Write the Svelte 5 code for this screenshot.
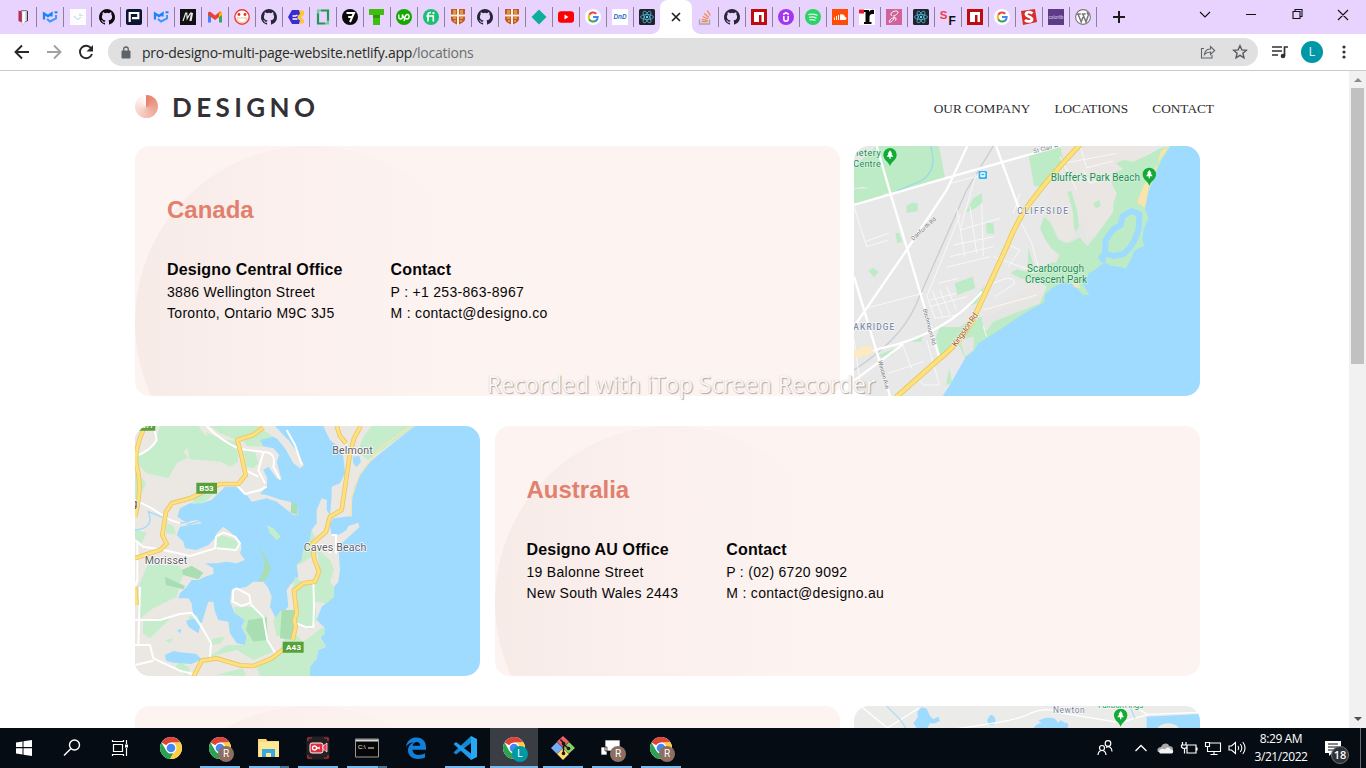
<script>
  const tabsLeft = [
    ['book', 28], ['mui', 27], ['swirl', 28], ['github', 29], ['p', 27], ['mui', 27], ['m', 27],
    ['gmail', 27], ['face', 27], ['github2', 27], ['hex', 27], ['scroll', 27], ['seven', 27],
    ['tee', 27], ['up', 27], ['fi', 27], ['shield', 27], ['github2', 27], ['shield', 27],
    ['diamond', 27], ['youtube', 27], ['google', 27], ['dnd', 27], ['react', 24]
  ];
  const tabsRight = [
    'stack', 'github2', 'npm', 'udemy', 'spotify', 'cloud', 'r', 'sass', 'react',
    'sf', 'npm', 'google', 's', 'colorlib', 'wordpress'
  ];
  const nav = ['OUR COMPANY', 'LOCATIONS', 'CONTACT'];
  const offices = [
    { country: 'Canada', office: 'Designo Central Office', lines: ['3886 Wellington Street', 'Toronto, Ontario M9C 3J5'], phone: 'P : +1 253-863-8967', mail: 'M : contact@designo.co', map: 'canada' },
    { country: 'Australia', office: 'Designo AU Office', lines: ['19 Balonne Street', 'New South Wales 2443'], phone: 'P : (02) 6720 9092', mail: 'M : contact@designo.au', map: 'australia' }
  ];
  const apps = [
    { icon: 'chrome' },
    { icon: 'chrome', badge: 'R', run: 'one' },
    { icon: 'folder', run: 'many' },
    { icon: 'recorder', run: 'one' },
    { icon: 'cmd', run: 'many' },
    { icon: 'edge' },
    { icon: 'vscode', run: 'one' },
    { icon: 'chrome', badge: 'L', run: 'active' },
    { icon: 'git', run: 'one' },
    { icon: 'windows', badge: 'R', run: 'one' },
    { icon: 'chrome', badge: 'R', run: 'one' }
  ];
</script>

{#snippet favicon(name)}
  <svg class="fav" viewBox="0 0 16 16">
    {#if name === 'book'}
      <path d="M6 1.500h6v11H9" fill="#fff" stroke="#8d7f9b" /><path d="M3.500 1.500 7 2.500v11L3.500 12z" fill="#b12e52" /><path d="M7 2.500h3.500v9l-2 4-1.500-2z" fill="#fff" stroke="#b9a9bd" stroke-width=".5" /><path d="M12.500 2v10" stroke="#35365e" />
    {:else if name === 'mui'}
      <path d="M2 10.500V4.500l4 2.500 3.500-2.500v3" fill="none" stroke="#1684ff" stroke-width="2.300" /><path d="M5 10l3 2.500 6-3V6" fill="none" stroke="#3b98ff" stroke-width="2" /><path d="M12.500 3.300h3" stroke="#1684ff" stroke-width="2" />
    {:else if name === 'swirl'}
      <path d="M0 0h16v16H0z" fill="#fdfdff" /><path d="M4.500 7c1 4 5 4 6 1M10 4.500V7M12 6v1" fill="none" stroke="#9bc9e2" stroke-width=".9" />
    {:else if name === 'github' || name === 'github2'}
      <path fill={name === 'github' ? '#0c0c0e' : '#262634'} d="M8 0a8 8 0 0 0-2.530 15.590c.4.070.55-.17.55-.38v-1.490c-2.230.49-2.700-.94-2.700-.94-.36-.92-.89-1.170-.89-1.170-.73-.5.050-.49.050-.49.810.060 1.230.83 1.230.83.720 1.230 1.880.87 2.340.67.070-.52.280-.88.500-1.080-1.770-.2-3.640-.89-3.640-3.950 0-.87.310-1.590.820-2.150-.080-.2-.350-1.020.080-2.120 0 0 .67-.22 2.200.82a7.600 7.600 0 0 1 4 0c1.530-1.040 2.200-.82 2.200-.82.440 1.100.160 1.920.080 2.120.510.560.820 1.270.820 2.150 0 3.070-1.870 3.750-3.650 3.950.290.250.540.73.540 1.480v2.190c0 .21.150.46.550.38A8 8 0 0 0 8 0z" />
    {:else if name === 'p'}
      <rect width="16" height="16" rx="2" fill="#0b1630" /><path d="M3.700 13V4h8.600v5.200H6" fill="none" stroke="#fff" stroke-width="2.200" />
    {:else if name === 'm'}
      <path d="M0 0h16v16H0z" fill="#111" /><path d="M3 12 5.700 4h1l.5 5.500L10.500 4h1L10 12M12.500 4 11 12" fill="none" stroke="#e8e8e8" stroke-width="1.200" />
    {:else if name === 'gmail'}
      <path d="M1 3v10.500h3V7z" fill="#4285f4" /><path d="M15 3v10.500h-3V7z" fill="#34a853" /><path d="M1 3.500 3 2.500 8 6.500 13 2.500 15 3.500V6L8 11 1 6z" fill="#ea4335" /><path d="M12 4.200 15 2.500V6l-3 2.200z" fill="#fbbc04" />
    {:else if name === 'face'}
      <circle cx="8" cy="8" r="7.200" fill="#fff" stroke="#e93e30" stroke-width="1.400" /><circle cx="5" cy="5.500" r="1.400" fill="#ef2a1b" /><circle cx="11" cy="5.500" r="1.400" fill="#ef2a1b" /><path d="M3 9c0 6 10 6 10 0z" fill="#fff" stroke="#f0a079" stroke-width=".7" />
    {:else if name === 'hex'}
      <path d="M4 1h7l2 3-3 3v3l3 2-2 3H4L0 8z" fill="#382bd3" /><path d="M4.500 7h3l2-1M4.500 10h5" stroke="#fff" fill="none" stroke-width="1.300" /><path d="m11 1 5 1v4l-3 2 3 3v3l-5 1 1-4-3-3 3-3z" fill="#ffc72f" />
    {:else if name === 'scroll'}
      <path d="M6 1.500h7v10.500M3 4v10.500h7" fill="none" stroke="#1f9a50" stroke-width="2.200" /><path d="M3 4.500v-3h3M13 11.500v3h-3" fill="none" stroke="#72ce94" stroke-width="2.200" />
    {:else if name === 'seven'}
      <circle cx="8" cy="8" r="8" fill="#0a0a0a" /><path d="M4.500 4H12L8 13M6.200 8H10" fill="none" stroke="#fff" stroke-width="2" />
    {:else if name === 'tee'}
      <path d="M0 0h15v6h-4v10H4V6H0z" fill="#3fbe10" /><path d="M4 6h7v3H4z" fill="#269b08" />
    {:else if name === 'up'}
      <circle cx="8" cy="8" r="8" fill="#14a800" /><path d="M2.800 5.500V8c0 2.700 3.600 2.700 3.600 0V5.500C7.500 9 8.500 10 10.800 10c3 0 3-4.500.5-4.500C9 5.500 9 8 8 12" fill="none" stroke="#fff" stroke-width="1.400" />
    {:else if name === 'fi'}
      <circle cx="8" cy="8" r="8" fill="#1dbf73" /><path d="M5 12.500V6c0-2 1-2.700 3-2.400M3.300 7h7v5.500" fill="none" stroke="#fff" stroke-width="1.700" /><circle cx="10.400" cy="4.200" r="1.100" fill="#fff" />
    {:else if name === 'shield'}
      <path d="M1 0h14v10c0 3-4 4.500-7 6-3-1.500-7-3-7-6z" fill="#c05a2c" /><path d="M8 0v16M1 6.500h14" stroke="#fff1d9" stroke-width="2" /><path d="M3 2h3M3 4h3M10 2h3M10 4h3M3 9h3M4 12h2M10 9h3M10 12h2" stroke="#ffd067" stroke-width="1" />
    {:else if name === 'diamond'}
      <path d="m8 .5 7.500 7.500L8 15.500.5 8z" fill="#0cae9e" />
    {:else if name === 'youtube'}
      <rect y="2.300" width="16" height="11.500" rx="3" fill="#f00" /><path d="m6.500 5.500 4 2.500-4 2.500z" fill="#fff" />
    {:else if name === 'google'}
      <circle cx="8" cy="8" r="8" fill="#fff" /><g fill="none" stroke-width="2"><path d="M4.300 5.800A4.500 4.500 0 0 1 11.300 4.800" stroke="#ea4335" /><path d="M4.300 5.700a4.800 4.800 0 0 0 0 4.600" stroke="#fbbc05" /><path d="M4.200 10.200a4.600 4.600 0 0 0 6.800 1.400" stroke="#34a853" /><path d="M8 8h4.700c0 1.700-.7 3-1.900 3.900" stroke="#4285f4" /></g>
    {:else if name === 'dnd'}
      <path d="M0 0h16v16H0z" fill="#fff" /><text x="1.500" y="10.300" font-size="6.500" font-weight="bold" font-style="italic" fill="#1d6cc5" textLength="13" lengthAdjust="spacingAndGlyphs">DnD</text>
    {:else if name === 'react'}
      <rect width="16" height="16" rx="1.500" fill="#20232d" /><g fill="none" stroke="#4fb7cf" stroke-width=".8"><ellipse cx="8" cy="8" rx="6.500" ry="2.500" /><ellipse cx="8" cy="8" rx="6.500" ry="2.500" transform="rotate(60 8 8)" /><ellipse cx="8" cy="8" rx="6.500" ry="2.500" transform="rotate(120 8 8)" /></g><circle cx="8" cy="8" r="1.200" fill="#61dafb" />
    {:else if name === 'stack'}
      <path d="M2.500 10.500v4.500h10v-4.500" fill="none" stroke="#aaa2a9" stroke-width="1.300" /><path d="M4.500 12.700h6M4.700 10.400l6 1.200M5.700 7.500l5.500 2.500M7.300 4.500l4.500 4M10.300 1.500l3 5" stroke="#f28b4a" stroke-width="1.300" />
    {:else if name === 'npm'}
      <path d="M0 0h16v16H0z" fill="#c00b0f" /><path d="M3 3h10v10h-2.500V6H8v7H3z" fill="#fff" />
    {:else if name === 'udemy'}
      <circle cx="8" cy="8" r="8" fill="#a435f0" /><path d="M5.200 5.500 8 3.600l2.800 1.900M5.800 7v3c0 3 4.400 3 4.400 0V7" fill="none" stroke="#fff" stroke-width="1.600" />
    {:else if name === 'spotify'}
      <circle cx="8" cy="8" r="8" fill="#2bd366" /><path d="M3.500 5.600c3-.8 6-.6 9 .8M4 8.300c2.600-.7 5-.4 7.500.8M4.500 10.800c2.200-.5 4-.3 6 .7" fill="none" stroke="#e3fbe9" stroke-width="1.300" />
    {:else if name === 'cloud'}
      <path d="M0 0h16v16H0z" fill="#ff4d08" /><path d="M8 11V5.500c3-1 4.500.5 4.700 2.300C15 8 15 11 13 11z" fill="#fff" /><path d="M2.500 8.500V11M4.500 7v4M6.500 6v5" stroke="#fff" />
    {:else if name === 'r'}
      <path d="M0 0h16v16H0z" fill="#fff" /><path d="M0 .5h5v4H0z" fill="#e51c2b" /><path d="M5 1h5v2c1-2 3-2.500 5-2v4c-3-.5-4.500.5-4.500 3v5h2v2H5v-2h1.500V3H5z" fill="#080808" />
    {:else if name === 'sass'}
      <path d="M0 0h16v16H0z" fill="#cf649a" /><path d="M6 7c-3-2 1-5.500 4.500-5 3.500.7 0 4.500-3 4.700 2.500 2-1.500 6-3.700 6.800-2-.8 1.500-5 5-4.800 2 .2 1.500 2.500 0 3" fill="none" stroke="#fff" />
    {:else if name === 'sf'}
      <text x="-.3" y="9.500" font-size="11.500" font-weight="bold" fill="#e7404b">S</text><text x="8.500" y="15.600" font-size="12" font-weight="bold" fill="#111">F</text>
    {:else if name === 's'}
      <path d="m0 2 14-2 2 13-14 3z" fill="#d42f2a" /><path d="M11.500 4.500C9 2 4.500 3 5 5.500s6 2 6 4.800-5 2.700-7 .7" fill="none" stroke="#fff" stroke-width="2.800" />
    {:else if name === 'colorlib'}
      <path d="M0 0h16v16H0z" fill="#5c3b87" /><text x=".5" y="10" font-size="5" fill="#ded3ef" textLength="15" lengthAdjust="spacingAndGlyphs">colorlib</text>
    {:else if name === 'wordpress'}
      <circle cx="8" cy="8" r="7.400" fill="#fff" stroke="#777" stroke-width="1.100" /><path d="M1.800 5h4M6.700 5h4M3 5l3.200 8L8 8M7.800 5l3.200 8 2.200-6.500c.4-1.500-.5-2.500-1.500-3" fill="none" stroke="#777" stroke-width="1.500" />
    {/if}
  </svg>
{/snippet}

{#snippet appicon(name)}
  <svg class="app" viewBox="0 0 24 24">
    {#if name === 'chrome'}
      <circle cx="12" cy="12" r="11" fill="#fff" /><path d="M12 12 2.500 6.500A11 11 0 0 1 21.500 6.500H12z" fill="#dd4437" /><path d="M2.470 6.500A11 11 0 0 0 11 22.950l5-8.500-8.800 0z" fill="#2aa251" /><path d="M21.500 6.500A11 11 0 0 1 11 22.950L16.500 14 15 6.500z" fill="#fdcf40" /><circle cx="12" cy="12" r="5.500" fill="#fff" /><circle cx="12" cy="12" r="4.300" fill="#4688f1" />
    {:else if name === 'folder'}
      <path d="M1 3h8l1.500 2H22v16H1z" fill="#fbd878" /><path d="M2 6h20v15H2z" fill="#ffe795" /><path d="M5 21v-8h13v8h-4v-4H9v4z" fill="#36a9df" />
    {:else if name === 'recorder'}
      <rect x=".5" y=".5" width="23" height="23" rx="3" fill="#241f22" /><path d="M2 5V2h4M18 2h4v3M2 19v3h4M18 22h4v-3" fill="none" stroke="#c93238" stroke-width="1.200" /><rect x="4" y="7" width="13" height="10" rx="2" fill="#e02c3c" stroke="#fff" /><path d="m17 10 4-3v9l-4-3z" fill="#ef405a" stroke="#fff" stroke-width=".7" /><circle cx="8.500" cy="12" r="2" fill="none" stroke="#fff" stroke-width="1.300" /><path d="m10 11 4 2M10 13l4-2" stroke="#fff" />
    {:else if name === 'cmd'}
      <path d="M.5 3h23v18H.5z" fill="#060606" stroke="#9a9a9a" /><path d="M1 3.500h22v2H1z" fill="#d9d9d9" /><text x="3" y="12.500" font-size="6" fill="#eee">C:\</text><path d="M13 12h6" stroke="#eee" />
    {:else if name === 'edge'}
      <path d="M2 11C3 4 7.500 1.500 12.500 1.500 19 1.500 22 6 22 11v2.700H8.500c.2 6 8 6.300 12.500 3.500v4.300C13 25 4 22 4 14.500 4 10 7 7.500 10 6.300 6.500 6.500 3.500 8 2 11zm6.600-1.200h7.700c0-5-7-5-7.700 0z" fill="#1280d8" fill-rule="evenodd" />
    {:else if name === 'vscode'}
      <path d="M18 0 24 3v18l-6 3z" fill="#2aa7f2" /><path d="M18 0v7L3 18.500.5 16.500z" fill="#1488d8" /><path d="M.5 8 3 6 18 17.500V24z" fill="#1f9bea" />
    {:else if name === 'git'}
      <path d="m12 0 6 5.500-6 6-6-6z" fill="#f05f64" /><path d="m18 6 6 6-6 5.500-6-5.500z" fill="#89d068" /><path d="m12 12 6 6-6 6-6-6z" fill="#ffd970" /><path d="m6 6 6 6-6 6-6-6z" fill="#77a9f4" /><path d="M9.500 3.500 12.500 7v11M12.500 8l5 4.500" fill="none" stroke="#1a1516" stroke-width="1.500" /><circle cx="12.500" cy="7.500" r="1.800" fill="#1a1516" /><circle cx="12.500" cy="17.500" r="1.800" fill="#1a1516" /><circle cx="17.500" cy="12.500" r="1.800" fill="#1a1516" />
    {:else}
      <path d="M5 4h15v11H5zM1 11h6v8H1z" fill="#fff" stroke="#111" stroke-width=".7" />
    {/if}
  </svg>
{/snippet}

{#snippet pin(x, y)}
  <g transform="translate({x} {y})">
    <path d="M0 30C-5 16-20 12-20-4a20 20 0 0 1 40 0C20 12 5 16 0 30z" fill="#13aa36" />
    <path d="m0-17 7 10H4l6 9H2v6h-4V2h-8l6-9h-3z" fill="#fff" />
  </g>
{/snippet}

{#snippet map(kind)}
  {#if kind === 'canada'}
    <svg class="map" viewBox="12 18 1038 750" preserveAspectRatio="none">
      <path d="M12 18h1038v750H12z" fill="#e8e8e8" />
      <path d="M640 18H900L850 200 700 330 560 420 590 470 400 560 400 500 540 450 470 380 560 400 620 350 570 270Z" fill="#e9e6e3" />
      <g fill="#bdebc5">
        <path d="M12 80 80 18H267L285 113 122 163 104 160 70 150 40 140 12 145Z" />
        <path d="M12 148 60 145 110 150 100 168 50 185 12 190ZM535 40 632 22 640 60 582 142 552 138ZM168 198 185 188 203 190 203 214 170 218ZM348 215 370 175 396 160 397 190 375 205 356 215ZM408 250 430 248 433 283 410 280ZM136 280 148 278 156 306 142 310ZM55 392 70 383 86 396 72 412ZM314 430 368 410 376 445 322 465ZM350 500 405 435 380 490ZM173 604 220 588 212 606ZM85 645 135 625 128 645 98 655ZM288 735 298 684 306 728Z" />
        <path d="M962 18 930 25 895 45 850 65 820 60 798 70 820 88 788 100 785 130 800 160 790 190 790 215 765 250 735 290 712 318 695 300 688 270 682 215 664 153 652 155 668 210 672 260 680 290 650 310 625 298 600 245 582 230 570 265 585 298 604 325 628 345 620 365 600 370 560 402 500 388 482 400 512 415 560 422 590 440 580 465 555 482 500 498 420 528 412 572 400 565 395 530 350 545 330 562 270 560 258 590 268 657 325 612 345 655 385 630 600 500 900 420 1000 18Z" />
        <path d="M730 190 748 180 752 198 738 205ZM535 322 550 372 550 402 534 385Z" />
      </g>
      <path d="M400 560 398 530 500 490 580 465 570 490 430 545 412 570ZM330 600 372 590 370 630 345 650ZM655 310 700 240 708 300 740 280 730 290 712 318 690 292Z" fill="#e5e6e4" />
      <path d="M962 18 935 60 915 105 898 150 885 205 895 235 882 265 877 300 882 318 865 325 850 335 845 355 828 385 805 380 785 378 765 368 752 375 735 390 718 398 705 420 700 435 718 465 700 465 682 448 675 435 640 425 605 445 585 465 582 488 540 510 500 535 440 575 385 610 372 632 348 650 325 690 300 735 278 768H1050V18Z" fill="#9fdaff" />
      <path d="M765 345 767 300 790 268 812 255 818 228 845 213 868 222 866 268 853 302 838 325 820 343 790 348 765 338Z" fill="none" stroke="#9fdaff" stroke-width="18" stroke-linejoin="round" />
      <path d="M745 350q10-18 22-4l0 20q-15 8-22-16" fill="#9fdaff" />
      <path d="m958 18-48 72-12 40-13 73-24-15 20-52 32-28 20-75z" fill="#fbe3ad" />
      <path d="m665 428 20 2 5 14-16-2z" fill="#f6e6bd" />
      <path d="M242 18c15 50 5 90-40 110-30 8-40 20-62 25" fill="none" stroke="#9fd8e8" stroke-width="4" />
      <path d="M430 18 350 150 195 500Q150 600 12 690" fill="none" stroke="#c9ccd1" stroke-width="4" />
      <g fill="none" stroke="#f8f8f8" stroke-width="3">
        <path d="M12 200 50 320 115 300M45 305l70-25M48 505l170-45M160 620l25 65M115 700l105-35M378 102 330 270l120-35M330 225 232 465M300 130l110-28M290 382l130-32M265 430l60-15M320 205 345 350M360 200l20 140M395 190 400 350M300 350l130-30M310 315l120-25M230 465l25 70 65-10M248 455l30 75M270 450l30 75M290 440l30 70M240 500l110-30M240 480l80-20M510 160l-20 60M515 250l30 60 20 70-20 20M465 310l45 20-35 50M430 430q60-30 65 0l-60 40M400 510l160-45M630 50l50 100M690 18l20 65 80-20M700 90l20 40 60-20M640 70l160-30M400 560l10 30M230 600l38 135-45 0-25-20M12 600l20 140M430 350l110 40" />
      </g>
      <g fill="none" stroke="#fff" stroke-width="7"><path d="m12 195 273-80L540 43l90-25M80 18l42 145 50 165L270 658M352 18 290 150 170 330 12 560M12 410 120 768M438 18l75 205M12 645l90-22Q290 580 395 455M12 722l148-110" /></g>
      <path d="m12 632 40-18 20 14-12 18-48 8z" fill="#fbeac2" />
      <g fill="none" stroke-linejoin="round"><path d="M690 14Q600 110 555 170 505 230 470 320L415 440 380 515Q350 590 270 655L138 772" stroke="#e9c65a" stroke-width="16" /><path d="M690 14Q600 110 555 170 505 230 470 320L415 440 380 515Q350 590 270 655L138 772" stroke="#fde17d" stroke-width="11" /></g>
      <g font-family="Roboto" font-weight="500">
        <g fill="#1b8a55" font-size="30" stroke="#e4f7e6" stroke-width="3" paint-order="stroke" font-weight="400">
          <text x="10" y="47" textLength="82" font-size="27">netery</text><text x="10" y="80" textLength="82" font-size="27">Centre</text>
          <text x="602" y="122" textLength="268">Bluffer's Park Beach</text>
          <text x="531" y="396" textLength="171">Scarborough</text><text x="525" y="429" textLength="186">Crescent Park</text>
        </g>
        <g fill="#7d8bab" font-size="25" stroke="#fff" stroke-width="3" paint-order="stroke"><text x="502" y="223" textLength="152">CLIFFSIDE</text><text x="10" y="570" textLength="123">AKRIDGE</text></g>
        <g fill="#75797d" font-size="18" font-weight="400" stroke="#f8f8f8" stroke-width="3" paint-order="stroke">
          <text transform="translate(190 302) rotate(-42)" textLength="94">Danforth Rd</text><text transform="translate(218 508) rotate(75)" textLength="112">Birchmount Rd</text><text transform="translate(84 663) rotate(75)" textLength="88">Warden Ave</text><text transform="translate(552 40) rotate(-14)" textLength="75">St Clair A</text>
        </g>
        <text transform="translate(318 622) rotate(-55)" font-size="25" fill="#a0521c" stroke="#fff" stroke-width="3" paint-order="stroke" font-weight="400" textLength="118">Kingston Rd</text>
      </g>
      <rect x="386" y="93" width="25" height="24" rx="4" fill="#28b4f0" /><rect x="391" y="97" width="15" height="15" rx="3" fill="#fff" /><path d="M394 101h9v5h-9z" fill="#28b4f0" />
      {@render pin(120, 48)}
      {@render pin(898, 107)}
    </svg>
  {:else if kind === 'australia'}
    <svg class="map narrow" viewBox="15 18 1035 750" preserveAspectRatio="none">
      <path d="M15 18h1035v750H15z" fill="#9fdaff" />
      <path fill="#ebe8e3" d="M15 18H435L455 40 480 65 500 95 522 135 510 145 490 130 465 85 440 55 425 52 400 65 395 78 430 85 448 105 440 125 455 180 440 175 415 140 400 150 412 175 410 200 390 222 410 225 455 240 480 245 500 255 505 285 490 285 440 245 410 235 365 245 350 225 320 200 285 200 270 215 245 240 215 250 180 250 150 265 142 290 165 305 205 300 215 310 150 320 140 345 160 365 165 385 200 390 235 375 255 355 260 340 280 320 300 335 330 365 335 385 330 400 345 420 320 430 290 425 260 430 225 430 250 445 250 462 225 470 205 480 185 480 170 500 150 520 145 535 175 535 185 550 190 590 215 610 235 545 250 545 255 575 265 600 295 605 300 640 320 670 345 675 350 650 335 620 345 600 315 580 300 545 305 510 350 500 370 485 400 485 415 505 425 530 420 560 435 590 450 620 465 600 455 580 475 560 470 510 480 495 505 470 500 435 515 420 520 390 540 360 545 330 560 310 560 270 575 235 590 240 590 270 600 285 605 230 605 200 630 190 645 160 640 110 625 80 600 60 590 40 580 18H855L820 45 770 85 720 125 690 165 672 200 665 240 665 288 610 295 600 312 605 335 625 345 650 330 655 318 685 308 688 322 640 365 625 385 630 450 625 485 612 500 612 530 575 560 560 600 585 625 570 650 588 680 565 690 560 715 540 740 540 768H15Z" />
      <g fill="#c5edcb">
        <path d="M90 18H205L225 45 320 65 325 125 300 140 272 125 180 118 172 85 160 95 175 112 140 130 115 175 50 160 20 130 18 110 70 80ZM240 18H390L370 45 318 60 270 40ZM335 55 400 30 430 50 400 65 390 80 350 78ZM340 90 375 95 385 130 370 145 350 140ZM15 150 48 190 28 235 15 250ZM700 50 725 18H855L790 65 715 120 695 105 690 75ZM190 228 250 222 225 245 190 252ZM110 310 130 318 138 343 108 340ZM15 330 50 338 35 370 15 365ZM260 355 275 345 318 360 328 380 310 392 262 385ZM55 430 150 438 160 465 150 490 140 530 70 565 25 600 25 500ZM40 600 125 592 60 655 38 640ZM410 315 430 325 452 350 440 360 420 340ZM545 330 555 350 550 370 560 400 500 440 515 420 520 390 540 360ZM560 385 600 420 612 450 600 485 612 500 612 530 590 550 555 545 560 600 540 628 500 612 495 640 520 665 520 698 450 690 470 640 440 650 430 600 455 570 500 570 485 520 495 470 520 490 555 480 570 450ZM520 665 560 635 580 620 585 640 570 655 588 680 565 690 560 715 540 740 540 768H390L380 745 430 715 465 695 520 698ZM312 560 365 560 410 590 415 655 430 695 370 720 320 690 280 700 230 715 290 675 345 675 350 650 335 620 345 600 315 580ZM175 590 200 585 210 605 180 610ZM105 660 130 655 120 670ZM258 765 338 745 348 768ZM225 35Q280 60 318 70L325 110 260 70ZM250 655 285 650 270 672 235 675ZM150 725 180 745 170 768 135 740Z" />
      </g>
      <g fill="#a9deb2"><path d="M105 470 165 498 160 508 108 495ZM155 450 185 437 220 458 205 478 160 465ZM388 375 403 405 423 445 408 478 385 487 397 460 405 430ZM484 245 502 255 502 285 482 278ZM355 600 410 592 412 660 370 665 348 630ZM455 570H497L495 660 450 655Z" /></g>
      <g fill="#9fdaff"><path d="M105 705 130 693 148 697 198 701 215 718 185 732 130 728 108 722ZM168 602 195 595 210 620 205 640 175 620ZM668 110 688 108 693 126 679 141 670 130ZM598 312H618L630 340 605 345ZM142 630 154 627 150 641ZM605 175 628 168 618 190ZM390 60 430 50 440 60 400 78Z" /><path d="M15 330q60-5 40-55l90 35 35-5M170 315l35-10 15-18" fill="none" stroke="#9fdaff" stroke-width="4" /></g>
      <g fill="none" stroke="#fff" stroke-width="6" stroke-linejoin="round">
        <path d="M15 110Q65 90 80 60L72 18M230 18Q270 60 325 85L335 88 400 96Q440 96 430 140L450 178M400 98 385 150 405 190M345 150 385 170M320 195 345 222 390 210 410 200M15 240 60 262 120 300 150 310M15 360 40 380 100 390 180 408 255 385 258 350 280 338 315 350 330 370 318 390 260 385M15 600 90 600 150 582 185 578 215 620 243 670 240 712M22 370V480L15 500M30 500 25 675M15 675H60L70 715 150 752 200 765M310 510 308 545 335 558 362 548 358 525 320 505ZM362 553 400 590 412 660 435 698M550 480 552 560 550 620 530 622 500 610M470 30 495 75 515 133M605 345H618V400M600 380V400M15 735 70 722" />
      </g>
      <path d="m840 20-90 65-60 75-25 70-2 60" fill="none" stroke="#fbe3ad" stroke-width="4" />
      {#each [['#ebc561', 14], ['#fde080', 9]] as [c, w]}
        <g fill="none" stroke={c} stroke-width={w} stroke-linejoin="round"><path d="M45 18Q15 80 18 130 40 200 15 290M400 22 370 45 322 60 335 110 347 165 325 192 270 192 180 235 125 250 108 275 97 345 110 372 90 390 15 415M620 18l10 30 18 22M692 18 672 55 660 100 635 270 600 290 588 335 548 370 552 415 567 455 555 485 520 490 492 512 500 580 493 600 497 620 488 660M460 688 425 715 370 738 330 736 260 715 215 722 190 772M15 500l5 55" /></g>
      {/each}
      <g fill="#58a03a"><path d="M18 18h58v14H30zM199 188h62v33h-62zM458 665h63v33h-63z" /></g>
      <g font-family="Roboto"><g fill="#fff" font-size="24" font-weight="700"><text x="208" y="213" textLength="43">B53</text><text x="468" y="690" textLength="45">A43</text><text x="35" y="25" font-size="20">B77</text></g>
      <g fill="#5d5d66" font-size="32" stroke="#fff" stroke-width="4" paint-order="stroke"><text x="607" y="101" textLength="121">Belmont</text><text x="521" y="393" textLength="188">Caves Beach</text><text x="44" y="431" textLength="128">Morisset</text><text x="4" y="260" fill="#333">g</text></g></g>
    </svg>
  {:else}
    <svg class="map" viewBox="12 18 1038 750" preserveAspectRatio="none">
      <path d="M12 18h1038v750H12z" fill="#ebebea" />
      <path d="M202 35 215 22 230 26 240 48 250 58 265 50 270 62 255 70 240 70 232 84H200L190 70 203 52ZM412 60q12-30 25 0l-3 12q-12 6-20 0zM550 90q5-20 25-20l-10-8 20-8q35-5 38 15 10-15 20 0 10-5 12 10l-10 15zM890 90V50l160-8v50z" fill="#9fdaff" />
      <ellipse cx="955" cy="90" rx="33" ry="20" fill="#ebebea" />
      <g fill="none" stroke="#fff" stroke-width="4"><path d="m32 18 80 66 95-60M290 90Q520 60 540 40 590 18 640 40l170 28 85-25 155-6M850 18l45 27" /></g><path d="m110 18 40 40 20 30M840 20l15 35" fill="none" stroke="#b2ddf2" stroke-width="4" />
      <g font-family="Roboto" stroke="#fff" stroke-width="3" paint-order="stroke"><text x="609" y="38" font-size="25" fill="#76819b" textLength="95">Newton</text><text x="744" y="24" font-size="25" fill="#23a157" textLength="136">Fairburn Ings</text></g>
      {@render pin(812, 50)}
    </svg>
  {/if}
{/snippet}

<div class="screen">
  <header class="tabs">
    <div class="group first">
      {#each tabsLeft as [name, width], i}
        <div class="tab" class:last={i === tabsLeft.length - 1} style="width:{width}px">{@render favicon(name)}</div>
      {/each}
    </div>
    <div class="tab-active"><svg viewBox="0 0 10 10"><path d="m1 1 8 8M9 1 1 9" stroke="#202124" stroke-width="1.700" /></svg></div>
    <div class="group second">
      {#each tabsRight as name}<div class="tab">{@render favicon(name)}</div>{/each}
    </div>
    <svg class="plus" viewBox="0 0 14 14"><path d="M7 1v12M1 7h12" stroke="#1d1b22" stroke-width="2" /></svg>
    <svg class="winctl" viewBox="0 0 180 34"><g fill="none" stroke="#111" stroke-width="1.100"><path d="m14 12 5 5 5-5M60 14.500h10M107 11.500h7v7h-7zM109 11.500v-2h7v7h-2M152 10l10 10M162 10l-10 10" /></g></svg>
  </header>

  <div class="toolbar">
    <svg class="navs" viewBox="0 0 100 36"><g fill="none" stroke-width="1.900"><path d="M29 18H16M22 11.500 15.500 18l6.500 6.500" stroke="#27282b" /><path d="M47 18h13M54 11.500l6.500 6.500-6.500 6.500" stroke="#a0a1a4" /><path d="M91.300 14.500A6.200 6.200 0 1 0 92 20" stroke="#27282b" /></g><path d="M93 11v6.500h-6.500z" fill="#27282b" /></svg>
    <div class="omni">
      <svg class="lock" viewBox="0 0 10 13"><rect x=".5" y="4.500" width="9" height="8" rx="1" fill="#5f6368" /><path d="M2.700 5V3.300a2.300 2.300 0 0 1 4.600 0V5" fill="none" stroke="#5f6368" stroke-width="1.300" /></svg>
      <span class="url">pro-designo-multi-page-website.netlify.app<span>/locations</span></span>
      <svg class="share" viewBox="0 0 16 16"><path d="M4 4.500H1.500v9.500h10.500v-3M4.500 10.500c.5-4 3-5.500 6-5.500V2.500l4.200 4-4.200 4V8c-2.500 0-4.500.7-6 2.500z" fill="none" stroke="#606367" stroke-width="1.100" /></svg>
      <svg class="star" viewBox="0 0 16 16"><path d="m8 1.700 1.800 4.200 4.600.4-3.500 3 1.100 4.500L8 11.400l-4 2.400 1.100-4.500-3.500-3 4.600-.4z" fill="none" stroke="#56595d" stroke-width="1.400" /></svg>
    </div>
    <svg class="queue" viewBox="0 0 16 14"><path d="M0 2h10M0 6h10M0 10h6M12.500 11V2H16" fill="none" stroke="#303134" stroke-width="1.700" /><circle cx="11" cy="11" r="2.300" fill="#303134" /></svg>
    <div class="avatar">L</div>
    <svg class="dots" viewBox="0 0 4 14"><g fill="#333"><circle cx="2" cy="2" r="1.600" /><circle cx="2" cy="7" r="1.600" /><circle cx="2" cy="12" r="1.600" /></g></svg>
  </div>

  <div class="view">
    <main>
      <div class="top">
        <div class="brand"><i></i><b>DESIGNO</b></div>
        <nav>{#each nav as item}<span>{item}</span>{/each}</nav>
      </div>
      {#each offices as o, i}
        <section class:flip={i % 2 === 1}>
          <article>
            <h2>{o.country}</h2>
            <div class="cols">
              <div><h3>{o.office}</h3>{#each o.lines as line}<p>{line}</p>{/each}</div>
              <div><h3>Contact</h3><p>{o.phone}</p><p>{o.mail}</p></div>
            </div>
          </article>
          {@render map(o.map)}
        </section>
      {/each}
      <section>
        <article></article>
        {@render map('uk')}
      </section>
    </main>
    <div class="scroll"><svg viewBox="0 0 16 17"><path d="m4 11 4-4 4 4z" fill="#8b8b8b" /></svg><i></i><svg class="down" viewBox="0 0 16 17"><path d="m4 6 4 4 4-4z" fill="#505050" /></svg></div>
  </div>

  <footer>
    <div class="sys"><svg viewBox="0 0 24 24"><path d="m4 6.500 6.500-1V11H4zM11.500 5.300 20 4v7h-8.500zM4 12.200h6.500v6.300L4 17.500zM11.500 12.200H20V20l-8.500-1.300z" fill="#fff" /></svg></div>
    <div class="sys"><svg viewBox="0 0 24 24"><g fill="none" stroke="#fff" stroke-width="1.400"><circle cx="14.500" cy="9" r="5" /><path d="m11 12.500-7 7" /></g></svg></div>
    <div class="sys gap"><svg viewBox="0 0 24 24"><g fill="none" stroke="#fff" stroke-width="1.200"><path d="M5.500 8.500h9v7h-9zM4.500 4v1.500h11V4M4.500 20v-1.500h11V20M18.500 4v4M18.500 12v8" /></g><path d="M17 8.500h3v3h-3z" fill="#fff" /></svg></div>
    {#each apps as a}
      <div class="slot {a.run ?? ''}">
        {@render appicon(a.icon)}
        {#if a.badge}<em class:teal={a.badge === 'L'}>{a.badge}</em>{/if}
      </div>
    {/each}
    <div class="tray">
      <svg class="people" viewBox="0 0 24 24"><g fill="none" stroke="#fff" stroke-width="1.200"><circle cx="9" cy="12" r="2.500" /><path d="M5 19c.5-6 7.500-6 8 0" /><circle cx="15" cy="7.500" r="2.800" /><path d="M13 11.500c3-2 6 0 6 4" /></g></svg>
      <svg viewBox="0 0 24 24"><path d="m6.500 15 5.500-5.500 5.500 5.500" fill="none" stroke="#fff" stroke-width="1.300" /></svg>
      <svg viewBox="0 0 24 24"><path d="M5 16c-2-4 2-5 3-5 2-5 8-4 8-1 4 0 5 3 3 6z" fill="#a9a9ab" /><path d="M7 17.500c-3-3 2-6 5-4 2-3 5-2 5.500 0 4 0 3 4 1 4z" fill="#f4f4f4" /></svg>
      <svg viewBox="0 0 24 24"><g fill="none" stroke="#fff" stroke-width="1.200"><path d="M10 9h9v8h-9zM20 11.500v3M5.500 6v3M9 6v3M4.500 9H10v2q-3 3-5.500 0zM7.500 12.500v5" /></g></svg>
      <svg viewBox="0 0 24 24"><g fill="none" stroke="#fff" stroke-width="1.100"><path d="M8 7h11.500v8.500h-13V12M4.500 6.500h4v4h-4zM6.500 10.500v2M13 15.500v3M9.500 18.500h7" /></g></svg>
      <svg viewBox="0 0 24 24"><g fill="none" stroke="#fff" stroke-width="1.100"><path d="M4 10h2.500L10.500 6.500v11L6.500 14H4zM13 10q1.500 2 0 4M15.300 8q3 4 0 8M17.800 6q4.500 6 0 12" /></g></svg>
      <div class="clock"><span>8:29 AM</span><span>3/21/2022</span></div>
      <div class="note"><svg viewBox="0 0 18 18"><path d="M1 2h16v12H8l-3 3v-3H1z" fill="#fff" /><path d="M4 5h10M4 8h10M4 11h7" stroke="#0a0d12" /></svg><b>18</b></div>
    </div>
  </footer>

  <div class="watermark">Recorded with iTop Screen Recorder</div>
</div>

<style>
  :global(body) { margin: 0; overflow: hidden; }
  * { box-sizing: border-box; }
  svg { display: block; flex: none; }
  .screen { position: relative; width: 1366px; height: 768px; overflow: hidden; display: flex; flex-direction: column; background: #fff; font-family: "Liberation Sans", Arial, sans-serif; }
  .tabs { height: 34px; background: #e7d3fe; display: flex; flex: none; }
  .group { display: flex; align-items: center; height: 34px; }
  .first { padding-left: 9px; width: 660px; }
  .tab { width: 27px; height: 20px; display: flex; align-items: center; justify-content: flex-end; padding-right: 5px; border-right: 1px solid #8e8099; flex: none; }
  .tab.last { border-right: 0; padding-right: 3px; }
  .fav { width: 16px; height: 16px; overflow: visible; }
  .tab-active { width: 32px; height: 34px; background: #fff; border-radius: 8px 8px 0 0; display: flex; align-items: center; justify-content: center; position: relative; }
  .tab-active::before, .tab-active::after { content: ''; position: absolute; bottom: 0; width: 8px; height: 8px; }
  .tab-active::before { left: -8px; background: radial-gradient(circle at 0 0, transparent 7.500px, #fff 8px); }
  .tab-active::after { right: -8px; background: radial-gradient(circle at 100% 0, transparent 7.500px, #fff 8px); }
  .tab-active svg { width: 10px; height: 10px; }
  .plus { width: 14px; height: 14px; margin: 10px 0 0 15px; }
  .winctl { width: 180px; height: 34px; margin-left: auto; }
  .toolbar { height: 37px; flex: none; display: flex; align-items: center; border-bottom: 1px solid #cbcaca; }
  .navs { width: 100px; height: 36px; }
  .omni { width: 1150px; height: 28px; margin-left: 8px; border-radius: 14px; background: #e0e0e0; display: flex; align-items: center; padding: 0 10px 0 13px; flex: none; }
  .lock { width: 10px; height: 13px; }
  .url { font: 14px "Open Sans", sans-serif; color: #2a2b2e; margin-left: 11px; white-space: nowrap; letter-spacing: -.24px; }
  .url span { color: #6c6d70; }
  .share { width: 16px; height: 16px; margin-left: auto; }
  .star { width: 16px; height: 16px; margin-left: 16px; }
  .queue { width: 16px; height: 14px; margin-left: 14px; }
  .avatar { width: 22px; height: 22px; border-radius: 50%; background: #0097a7; color: #d9f5f7; font: 12px/22px Roboto, sans-serif; text-align: center; margin-left: 13px; }
  .dots { width: 4px; height: 14px; margin-left: 19px; }
  .view { height: 657px; flex: none; display: flex; overflow: hidden; }
  main { width: 1349px; padding: 0 149px 0 135px; }
  .top { height: 75px; display: flex; justify-content: space-between; align-items: center; margin-right: -14px; }
  .brand { display: flex; align-items: center; margin-top: -4px; }
  .brand i { width: 23px; height: 23px; border-radius: 50%; background: conic-gradient(#e7816b, #fff); }
  .brand b { font: 700 26px/30px Lato, sans-serif; letter-spacing: 4.400px; color: #333136; margin-left: 14px; }
  nav { display: flex; gap: 24px; font: 13.300px "Liberation Serif", serif; color: #2d2c31; }
  section { display: flex; justify-content: space-between; height: 250px; margin-bottom: 30px; }
  .flip { flex-direction: row-reverse; }
  article { width: 705px; height: 250px; border-radius: 15px; background: radial-gradient(circle 176px at 176px 176px, #0000 175.500px, #fdf3f0 176.500px), linear-gradient(90deg, #f6ebe7, #faefec 120px, #fdf3f0 315px); padding: 50px 32px; color: #070707; }
  .flip article { padding-left: 31.500px; }
  .map { width: 346px; height: 250px; border-radius: 15px; }
  .map.narrow { width: 345px; }
  h2 { margin: 0; font-size: 24px; line-height: 28px; color: #e2806e; }
  h3 { margin: 0; font-size: 16px; line-height: 20px; letter-spacing: .14px; }
  p { margin: 0; font-size: 14px; line-height: 21px; letter-spacing: .3px; }
  h3 + p { margin-top: 2px; }
  .cols { display: flex; gap: 48px; margin-top: 36px; white-space: nowrap; }
  .scroll { width: 17px; background: #f1f1f1; display: flex; flex-direction: column; align-items: center; }
  .scroll svg { width: 16px; height: 17px; }
  .scroll i { width: 13px; height: 276px; background: #c1c1c1; }
  .scroll .down { margin-top: auto; }
  footer { height: 40px; background: #060c14; display: flex; flex: none; }
  .sys { width: 48px; padding: 8px 12px; }
  .sys svg { width: 24px; height: 24px; }
  .sys.gap { margin-right: 3px; }
  .slot { width: 49px; height: 40px; display: flex; justify-content: center; padding: 8px 1px 0 0; position: relative; flex: none; }
  .app { width: 24px; height: 24px; }
  .slot::after { position: absolute; left: 4px; bottom: 0; width: 40px; height: 2px; }
  .one::after, .many::after, .active::after { content: ''; background: #76b9ed; }
  .many::after { background: linear-gradient(90deg, #76b9ed 31px, #33526c 31px, #4d7594 32px); }
  .active { background: linear-gradient(90deg, #3a3e44 48px, transparent 48px); }
  .active::after { left: 0; width: 48px; }
  .slot em { position: absolute; left: 22px; top: 18px; width: 16px; height: 16px; border-radius: 50%; background: #8d6e63; color: #fff; font: 10px/16px Roboto, sans-serif; text-align: center; }
  .slot em.teal { background: #0097a7; }
  .tray { margin-left: auto; width: 273px; display: flex; align-items: center; color: #fff; }
  .tray > svg { width: 24px; height: 24px; }
  .tray .people { margin-right: 12px; }
  .clock { width: 64px; display: flex; flex-direction: column; align-items: center; font: 12px/18px "Open Sans", sans-serif; letter-spacing: -.42px; }
  .note { position: relative; margin-left: 11px; width: 37px; height: 40px; border-right: 1px solid #666b70; }
  .note svg { width: 18px; height: 18px; margin-top: 11px; }
  .note b { position: absolute; left: 7px; top: 18px; width: 18px; height: 18px; border-radius: 50%; border: 1px solid #71757a; background: #2e3135; font: 600 11px/16px "Open Sans", sans-serif; text-align: center; }
  .watermark { position: absolute; left: 487px; top: 368px; font: 23px/32px "Open Sans", sans-serif; color: #fbf7f6; white-space: nowrap; letter-spacing: -.03px; text-shadow: 1px 1px 1px #8f8987b0, 0 0 1px #a8a09e90; }
</style>
